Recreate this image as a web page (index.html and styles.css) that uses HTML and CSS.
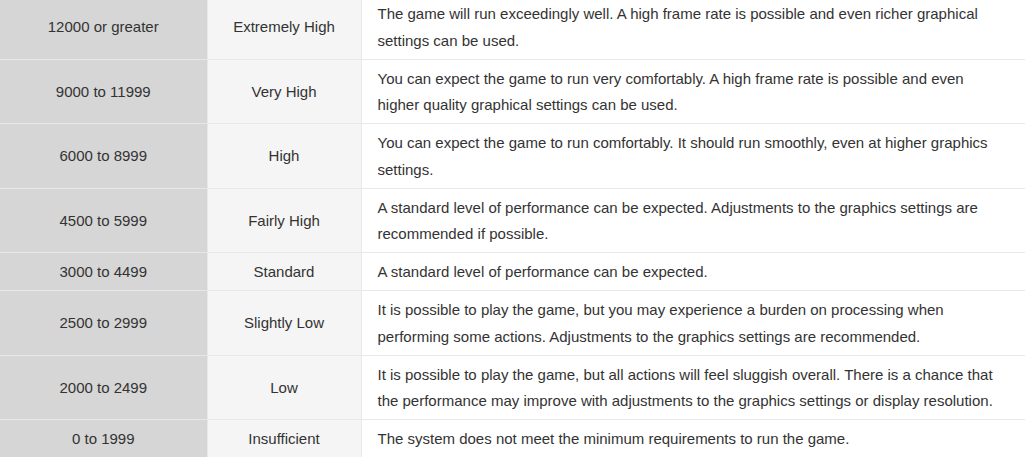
FILE: index.html
```html
<!DOCTYPE html>
<html lang="en">
<head>
<meta charset="utf-8">
<title>Benchmark scores</title>
<link rel="stylesheet" href="styles.css">
</head>
<body>
<table class="score-table">
  <colgroup>
    <col class="c-score">
    <col class="c-rating">
    <col class="c-desc">
  </colgroup>
  <tbody>
    <tr><td class="score">12000 or greater</td><td class="rating">Extremely High</td><td class="desc">The game will run exceedingly well. A high frame rate is possible and even richer graphical settings can be used.</td></tr>
    <tr><td class="score">9000 to 11999</td><td class="rating">Very High</td><td class="desc">You can expect the game to run very comfortably. A high frame rate is possible and even higher quality graphical settings can be used.</td></tr>
    <tr><td class="score">6000 to 8999</td><td class="rating">High</td><td class="desc">You can expect the game to run comfortably. It should run smoothly, even at higher graphics settings.</td></tr>
    <tr><td class="score">4500 to 5999</td><td class="rating">Fairly High</td><td class="desc">A standard level of performance can be expected. Adjustments to the graphics settings are recommended if possible.</td></tr>
    <tr><td class="score">3000 to 4499</td><td class="rating">Standard</td><td class="desc">A standard level of performance can be expected.</td></tr>
    <tr><td class="score">2500 to 2999</td><td class="rating">Slightly Low</td><td class="desc">It is possible to play the game, but you may experience a burden on processing when performing some actions. Adjustments to the graphics settings are recommended.</td></tr>
    <tr><td class="score">2000 to 2499</td><td class="rating">Low</td><td class="desc">It is possible to play the game, but all actions will feel sluggish overall. There is a chance that the performance may improve with adjustments to the graphics settings or display resolution.</td></tr>
    <tr><td class="score">0 to 1999</td><td class="rating">Insufficient</td><td class="desc">The system does not meet the minimum requirements to run the game.</td></tr>
  </tbody>
</table>
</body>
</html>
```

FILE: styles.css
```css
html, body {
  margin: 0;
  padding: 0;
  background: #ffffff;
}

.score-table {
  width: 1025px;
  margin-top: -5px;
  border-collapse: collapse;
  table-layout: fixed;
  font-family: "Liberation Sans", Arial, sans-serif;
  font-size: 15px;
  line-height: 26.5px;
  color: #333333;
}

.c-score { width: 207px; }
.c-rating { width: 154px; }

.score-table td {
  border: 1px solid #e8e8e8;
  padding: 6px 16px 4.5px;
  vertical-align: middle;
}

.score-table tr:first-child td { border-top: none; }
.score-table td:first-child { border-left: none; }
.score-table td:last-child { border-right: none; }

.score {
  background: #d6d6d6;
  text-align: center;
}

.rating {
  background: #f5f5f5;
  text-align: center;
}

.desc {
  background: #ffffff;
  text-align: left;
}
```
